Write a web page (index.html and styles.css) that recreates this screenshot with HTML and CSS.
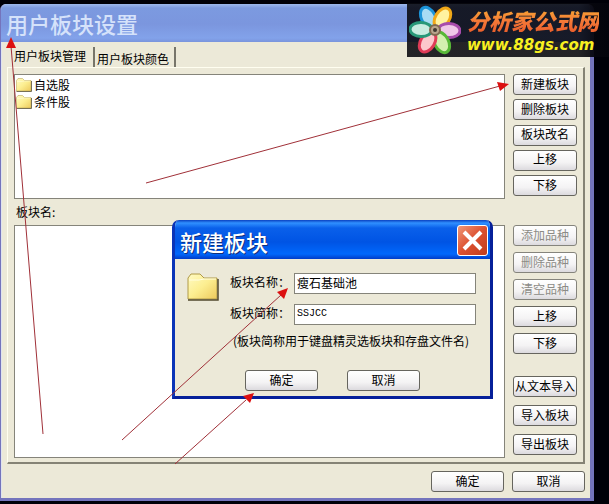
FILE: index.html
```html
<!DOCTYPE html>
<html lang="zh-CN">
<head>
    <meta charset="UTF-8">
    <meta name="viewport" content="width=device-width, initial-scale=1.0">
    <title>用户板块设置</title>
    <link rel="stylesheet" href="styles.css">
</head>
<body>
    <svg class="symbols" aria-hidden="true">
        <linearGradient id="folderFill" x1="0" y1="0" x2="1" y2="1">
            <stop offset="0" stop-color="#fffbc4"/>
            <stop offset="0.5" stop-color="#fcee90"/>
            <stop offset="1" stop-color="#ecc95c"/>
        </linearGradient>
        <symbol id="folder" viewBox="0 0 32 28">
            <path d="M1 26V5L4 1H13L17 5H30V26Z" fill="url(#folderFill)" stroke="#b09a48"/>
            <path d="M2 7H12L17 6H29" fill="none" stroke="#fffde0"/>
            <path d="M1 27H31V6" fill="none" stroke="#50482c" stroke-width="1.5"/>
        </symbol>
    </svg>

    <main class="window">
        <header class="titlebar">
            <h1>用户板块设置</h1>
        </header>
        <div class="window-body">
            <nav class="tabs">
                <button type="button" class="tab active">用户板块管理</button>
                <button type="button" class="tab">用户板块颜色</button>
            </nav>
            <div class="panel">
                <section class="row">
                    <ul class="list">
                        <li><svg class="icon"><use href="#folder"/></svg>自选股</li>
                        <li><svg class="icon"><use href="#folder"/></svg>条件股</li>
                    </ul>
                    <div class="actions spread">
                        <button type="button" class="btn">新建板块</button>
                        <button type="button" class="btn">删除板块</button>
                        <button type="button" class="btn">板块改名</button>
                        <button type="button" class="btn">上移</button>
                        <button type="button" class="btn">下移</button>
                    </div>
                </section>
                <h2 class="list-label">板块名:</h2>
                <section class="row grow">
                    <div class="list"></div>
                    <div class="actions">
                        <button type="button" class="btn" disabled>添加品种</button>
                        <button type="button" class="btn" disabled>删除品种</button>
                        <button type="button" class="btn" disabled>清空品种</button>
                        <button type="button" class="btn">上移</button>
                        <button type="button" class="btn">下移</button>
                        <div class="actions imports">
                            <button type="button" class="btn">从文本导入</button>
                            <button type="button" class="btn">导入板块</button>
                            <button type="button" class="btn">导出板块</button>
                        </div>
                    </div>
                </section>
            </div>
            <footer class="footer">
                <button type="button" class="btn wide">确定</button>
                <button type="button" class="btn wide">取消</button>
            </footer>
        </div>
    </main>

    <form class="dialog" role="dialog" aria-labelledby="dialogTitle">
        <header class="dialog-title">
            <h2 id="dialogTitle">新建板块</h2>
            <button type="button" class="close" aria-label="关闭">
                <svg viewBox="0 0 29 29"><path d="M6 6L23 23M23 6L6 23" stroke="#fff" stroke-width="4"/></svg>
            </button>
        </header>
        <div class="dialog-body">
            <svg class="folder-large"><use href="#folder"/></svg>
            <div class="fields">
                <div class="field">
                    <label for="blockName">板块名称：</label>
                    <input type="text" id="blockName" value="瘦石基础池">
                </div>
                <div class="field">
                    <label for="shortName">板块简称：</label>
                    <input type="text" id="shortName" class="code" value="SSJCC">
                </div>
                <p class="note">(板块简称用于键盘精灵选板块和存盘文件名)</p>
            </div>
        </div>
        <div class="dialog-actions">
            <button type="button" class="btn wide">确定</button>
            <button type="button" class="btn wide">取消</button>
        </div>
    </form>

    <!-- step arrows -->
    <svg class="arrows" viewBox="0 0 609 504" preserveAspectRatio="xMinYMin" aria-hidden="true">
        <g stroke="#a03038" stroke-width="1">
            <path d="M43 434L11 46"/>
            <path d="M146 183L500 86"/>
            <path d="M122 440L281 295"/>
            <path d="M175 464L246 400"/>
        </g>
        <g fill="#dc1010">
            <path d="M11 37L6 48H16Z"/>
            <path d="M509 84L497 82L500 91Z"/>
            <path d="M288 288L277 292L284 299Z"/>
            <path d="M254 393L243 396L250 403Z"/>
        </g>
    </svg>

    <aside class="badge">
        <svg class="flower" viewBox="0 0 52 52" aria-hidden="true">
            <g stroke-width="3">
                <ellipse cx="26" cy="12" rx="7" ry="11" fill="#a8dcf4" stroke="#1c94d8" transform="rotate(-28 26 26)"/>
                <ellipse cx="26" cy="12" rx="7" ry="11" fill="#fff2a0" stroke="#f0a818" transform="rotate(32 26 26)"/>
                <ellipse cx="26" cy="12" rx="7" ry="11" fill="#f0c8e8" stroke="#a84cac" transform="rotate(92 26 26)"/>
                <ellipse cx="26" cy="12" rx="7" ry="11" fill="#d4f0b0" stroke="#58b838" transform="rotate(152 26 26)"/>
                <ellipse cx="26" cy="12" rx="7" ry="11" fill="#fcc8cc" stroke="#e03c58" transform="rotate(212 26 26)"/>
                <ellipse cx="26" cy="12" rx="7" ry="11" fill="#c8ece0" stroke="#289878" transform="rotate(272 26 26)"/>
            </g>
            <circle cx="26" cy="26" r="5" fill="#b8a48c" stroke="#806850" stroke-width="2"/>
            <circle cx="26" cy="26" r="2" fill="#403830"/>
        </svg>
        <div>
            <strong class="site-name">分析家公式网</strong>
            <a class="site-url" href="#">www.88gs.com</a>
        </div>
    </aside>
</body>
</html>
```

FILE: styles.css
```css
/* General styling */
* {
    box-sizing: border-box;
}

body {
    margin: 0;
    padding: 4px 15px 3px 0;
    min-height: 100vh;
    display: flex;
    background: #000008;
    color: #000;
    font-family: "Noto Sans CJK SC", sans-serif;
    font-size: 12px;
    line-height: 16px;
}

h1, h2, p, ul {
    margin: 0;
    padding: 0;
    font-weight: normal;
}

button, input {
    font: inherit;
    color: inherit;
}

.symbols {
    position: absolute;
    width: 0;
    height: 0;
}

/* Main window */
.window {
    flex: 1;
    display: flex;
    flex-direction: column;
    border: 1px solid #7474bc;
    border-width: 0 4px 3px 1px;
    border-radius: 6px 6px 0 0;
    background: #ece9d8;
    overflow: hidden;
}

.titlebar {
    height: 38px;
    padding: 3px 5px;
    background: linear-gradient(#9db9ec 0, #7c9ae0 4px, #7b96de 20px, #82a2ea 34px, #7a94dc);
}

.titlebar h1 {
    font-size: 22px;
    font-weight: 500;
    line-height: 32px;
    color: #d5e2fa;
}

.window-body {
    flex: 1;
    display: flex;
    flex-direction: column;
    padding: 5px 5px 6px 5px;
    border-left: 1px solid #dfe3ee;
}

/* Tabs */
.tabs {
    display: flex;
    height: 20px;
    padding-left: 5px;
}

.tab {
    padding: 3px 5px 0 2px;
    border: 0;
    border-right: 2px solid #77756a;
    background: none;
    line-height: 16px;
}

.tab.active {
    padding: 0 7px 3px 2px;
}

/* Panel with both lists */
.panel {
    flex: 1;
    display: flex;
    flex-direction: column;
    padding: 6px 6px 4px 6px;
    border: 1px solid #fffef0;
    border-right: 2px solid #858375;
    border-bottom: 2px solid #858375;
}

.row {
    display: flex;
    gap: 8px;
    height: 125px;
}

.row.grow {
    flex: 1;
    height: auto;
}

.list {
    flex: 1;
    padding: 1px;
    list-style: none;
    background: #fff;
    border: 1px solid #85847a;
}

.list li {
    display: flex;
    align-items: center;
    gap: 2px;
    height: 17px;
}

.icon {
    width: 16px;
    height: 14px;
}

.list-label {
    padding: 5px 2px;
    font-size: 12px;
    line-height: 16px;
}

.actions {
    display: flex;
    flex-direction: column;
    gap: 6px;
    width: 64px;
}

.actions.spread {
    justify-content: space-between;
    padding-bottom: 3px;
    gap: 0;
}

.actions.imports {
    margin-top: auto;
    padding-bottom: 3px;
    gap: 8px;
}

.btn {
    height: 21px;
    padding: 0 0 2px;
    border: 1px solid #66655e;
    border-radius: 3px;
    background: linear-gradient(#fff, #f4f3f4 60%, #dcdade);
    line-height: 16px;
    white-space: nowrap;
}

.btn:disabled {
    color: #8c8b86;
    border-color: #85847c;
}

.btn.wide {
    width: 73px;
}

.footer {
    display: flex;
    justify-content: flex-end;
    gap: 8px;
    padding-top: 7px;
}

/* New block dialog */
.dialog {
    position: absolute;
    left: 172px;
    top: 220px;
    width: 321px;
    border: 3px solid #0a34b8;
    border-top: 0;
    border-right-color: #06209a;
    border-bottom-color: #06209a;
    border-radius: 7px 7px 0 0;
    background: #ece9d8;
    overflow: hidden;
}

.dialog-title {
    display: flex;
    align-items: center;
    justify-content: space-between;
    height: 39px;
    padding: 2px 2px 0 5px;
    background: linear-gradient(#0a40c0 0, #3090ff 3px, #0a60ea 8px, #0054e4 22px, #0068fc 34px, #003cc8);
}

.dialog-title h2 {
    font-size: 22px;
    font-weight: 500;
    line-height: 32px;
    color: #fff;
    text-shadow: 1px 1px #10307c;
}

.close {
    width: 31px;
    height: 31px;
    padding: 0;
    border: 1px solid #fff;
    border-radius: 3px;
    background: linear-gradient(135deg, #f09878, #dc5030 50%, #c03c1c);
}

.close svg {
    display: block;
    width: 29px;
    height: 29px;
}

.dialog-body {
    display: flex;
    gap: 10px;
    padding: 14px 14px 0 12px;
}

.folder-large {
    width: 32px;
    height: 28px;
}

.fields {
    flex: 1;
    display: flex;
    flex-direction: column;
    gap: 10px;
}

.field {
    display: flex;
    align-items: center;
}

.field label {
    width: 65px;
    padding: 0 0 3px 1px;
    white-space: nowrap;
}

.field input {
    flex: 1;
    min-width: 0;
    height: 21px;
    padding: 0 2px 3px;
    border: 1px solid #85847a;
    background: #fff;
}

.field .code {
    font-family: "Liberation Mono", monospace;
    font-size: 10px;
}

.note {
    padding-left: 4px;
    line-height: 12px;
    white-space: nowrap;
}

.dialog-actions {
    display: flex;
    justify-content: center;
    gap: 29px;
    padding: 23px 0 5px;
}

/* Arrows over both windows */
.arrows {
    position: absolute;
    left: 0;
    top: 0;
    width: 100%;
    pointer-events: none;
}

/* Site badge */
.badge {
    position: absolute;
    top: 3px;
    right: 0;
    display: flex;
    align-items: center;
    gap: 6px;
    width: 202px;
    height: 54px;
    padding-left: 2px;
    background: linear-gradient(90deg, rgba(8, 8, 14, 0.88) 85%, #04040c);
}

.flower {
    width: 52px;
    height: 52px;
}

.site-name {
    display: block;
    font-size: 22px;
    font-weight: 900;
    font-style: italic;
    line-height: 30px;
    color: transparent;
    background: linear-gradient(#f8b430, #f47838 55%, #e85828);
    background-clip: text;
    -webkit-background-clip: text;
}

.site-url {
    display: block;
    font-family: "DejaVu Sans", sans-serif;
    font-size: 15px;
    font-weight: bold;
    font-style: italic;
    line-height: 20px;
    color: #f8f020;
    text-decoration: none;
}
```
